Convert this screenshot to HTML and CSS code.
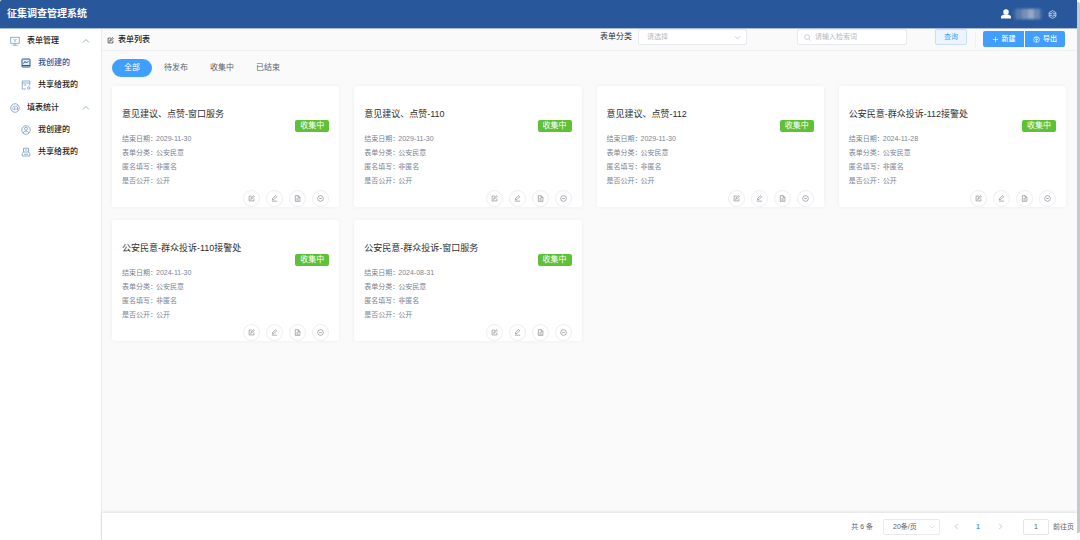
FILE: index.html
```
<!DOCTYPE html>
<html lang="zh-CN">
<head>
<meta charset="utf-8">
<meta name="viewport" content="width=device-width, initial-scale=1">
<title>征集调查管理系统</title>
<link rel="stylesheet" href="styles.css">
</head>
<body>
<svg class="sprite" aria-hidden="true">
  <symbol id="i-edit" viewBox="0 0 16 16"><path d="M9 2.500H2.500v11h11V8M6 10l1-3 6-5.500 1.500 1.500-6 6z"/></symbol>
  <symbol id="i-pen" viewBox="0 0 16 16"><path d="M3 11l1-3.500L10.500 1.500l2.500 2.500-6.500 6.500zM2 14h12"/></symbol>
  <symbol id="i-doc" viewBox="0 0 16 16"><path d="M3 1.500h6.500L13.500 5.500v9H3zM9.500 1.500v4h4M5.500 8.500h5M5.500 11.500h5"/></symbol>
  <symbol id="i-minus" viewBox="0 0 16 16"><circle cx="8" cy="8" r="6.500"/><path d="M5 8h6"/></symbol>
  <symbol id="i-up" viewBox="0 0 16 16"><path d="M2 11l6-6 6 6"/></symbol>
  <symbol id="i-down" viewBox="0 0 16 16"><path d="M2 5l6 6 6-6"/></symbol>
  <symbol id="i-left" viewBox="0 0 16 16"><path d="M11 2L5 8l6 6"/></symbol>
  <symbol id="i-right" viewBox="0 0 16 16"><path d="M5 2l6 6-6 6"/></symbol>
</svg>
<div class="app">
  <header class="header">
    <h1 class="brand">征集调查管理系统</h1>
    <div class="user">
      <svg class="user-icon" viewBox="0 0 20 20"><circle cx="10" cy="6" r="5.500"/><path d="M0 19v-3c0-3 3-4 6-5h8c3 1 6 2 6 5v3z"/></svg>
      <span class="user-name"><i></i><i></i><i></i><i></i></span>
      <button class="settings" aria-label="设置"><svg class="icon" viewBox="0 0 16 16"><path d="M8 1l6 3.500v7L8 15l-6-3.500v-7z"/><circle cx="8" cy="8" r="3"/><path d="M2 6h3M11 6h3M2 10h3M11 10h3"/></svg></button>
    </div>
  </header>
  <div class="body">
    <nav class="sidebar">
      <section>
        <button class="group-head">
          <svg class="icon nav-icon" viewBox="0 0 20 20"><rect x="1.500" y="2.500" width="17" height="12"/><path d="M10 15v3M5 18.500h10M7 6l3 3 3-3M10 9v3"/></svg>
          <span>表单管理</span><svg class="icon fold"><use href="#i-up"/></svg>
        </button>
        <a class="item active" href="#"><svg class="icon nav-icon" viewBox="0 0 20 20"><rect x="2" y="2" width="16" height="16" rx="1"/><path d="M2 15h16M5 11l3-4 3 3 4-4"/></svg>我创建的</a>
        <a class="item" href="#"><svg class="icon nav-icon" viewBox="0 0 20 20"><path d="M10 18H2.500V2h15v9M2.500 6h15M5.500 10h5"/><circle cx="15.500" cy="16" r="2.500"/></svg>共享给我的</a>
      </section>
      <section>
        <button class="group-head">
          <svg class="icon nav-icon" viewBox="0 0 20 20"><circle cx="10" cy="10" r="8.500"/><path d="M6 14v-3M9 14V9M12 14v-3M15 14V8M5 9l4-3 2 2 4-3"/></svg>
          <span>填表统计</span><svg class="icon fold"><use href="#i-up"/></svg>
        </button>
        <a class="item" href="#"><svg class="icon nav-icon" viewBox="0 0 20 20"><circle cx="10" cy="10" r="8.500"/><circle cx="10" cy="7.500" r="3"/><path d="M4.500 16c1-5 10-5 11 0"/></svg>我创建的</a>
        <a class="item" href="#"><svg class="icon nav-icon" viewBox="0 0 20 20"><path d="M5 10V2.500h10V10M5 10l-2.500 3v5h15v-5L15 10zM6 14.500h8M8 6h4"/></svg>共享给我的</a>
      </section>
    </nav>
    <main class="main">
      <div class="toolbar">
        <h2 class="page-title"><svg class="icon"><use href="#i-edit"/></svg>表单列表</h2>
        <label class="label" for="category">表单分类</label>
        <div class="field category">
          <select id="category"><option>请选择</option></select>
          <svg class="icon"><use href="#i-down"/></svg>
        </div>
        <div class="field search">
          <svg class="icon" viewBox="0 0 16 16"><circle cx="7" cy="7" r="5.500"/><path d="M11 11l4 4"/></svg>
          <input type="text" aria-label="检索词" placeholder="请输入检索词">
        </div>
        <button class="query">查询</button>
        <div class="actions">
          <button class="primary"><svg class="icon" viewBox="0 0 16 16"><path d="M8 2v12M2 8h12"/></svg>新建</button>
          <button class="primary"><svg class="icon" viewBox="0 0 16 16"><circle cx="8" cy="8" r="6.500"/><path d="M8 14V7M5 9l3-3 3 3M4 4h8"/></svg>导出</button>
        </div>
      </div>
      <div class="content">
        <div class="tabs">
          <button class="tab selected">全部</button>
          <button class="tab">待发布</button>
          <button class="tab">收集中</button>
          <button class="tab">已结束</button>
        </div>
        <div class="cards" id="cards"></div>
      </div>
      <footer class="pager">
        <span class="total">共 6 条</span>
        <div class="field size">
          <select aria-label="每页条数"><option>20条/页</option></select>
          <svg class="icon"><use href="#i-down"/></svg>
        </div>
        <button class="page" aria-label="上一页"><svg class="icon"><use href="#i-left"/></svg></button>
        <button class="page current">1</button>
        <button class="page" aria-label="下一页"><svg class="icon"><use href="#i-right"/></svg></button>
        <input class="jump" id="jump" type="text" value="1">
        <label for="jump">前往页</label>
      </footer>
    </main>
  </div>
</div>
<div class="edge"></div>
<script src="cards.js"></script>
</body>
</html>
```

FILE: cards.js
```
const forms = [
  ["意见建议、点赞-窗口服务", "2029-11-30"],
  ["意见建议、点赞-110", "2029-11-30"],
  ["意见建议、点赞-112", "2029-11-30"],
  ["公安民意-群众投诉-112接警处", "2024-11-28"],
  ["公安民意-群众投诉-110接警处", "2024-11-30"],
  ["公安民意-群众投诉-窗口服务", "2024-08-31"]
];
const tools = [["i-edit", "编辑"], ["i-pen", "填写"], ["i-doc", "查看"], ["i-minus", "停止"]];

document.getElementById("cards").innerHTML = forms.map(([title, date]) => `
  <article class="card">
    <div class="card-head"><h3 class="card-title">${title}</h3><span class="badge">收集中</span></div>
    <dl class="facts">
      <div><dt>结束日期：</dt><dd>${date}</dd></div>
      <div><dt>表单分类：</dt><dd>公安民意</dd></div>
      <div><dt>匿名填写：</dt><dd>非匿名</dd></div>
      <div><dt>是否公开：</dt><dd>公开</dd></div>
    </dl>
    <div class="tools">${tools.map(([id, name]) => `<button class="tool" aria-label="${name}"><svg class="icon"><use href="#${id}"/></svg></button>`).join("")}</div>
  </article>`).join("");
```

FILE: styles.css
```
* { box-sizing: border-box; }
body {
  margin: 0;
  min-height: 100vh;
  display: flex;
  background: #fff;
  color: #303133;
  font: 8px/14px "Liberation Sans", "Noto Sans CJK SC", sans-serif;
}
h1, h2, h3, dl, dd { margin: 0; font: inherit; }
button, input, select { font: inherit; color: inherit; margin: 0; padding: 0; border: 0; background: none; }
button { cursor: pointer; white-space: nowrap; }
a { color: inherit; text-decoration: none; }
.sprite { display: none; }
.icon { width: 7px; height: 7px; flex: none; fill: none; stroke: currentColor; stroke-width: 1.5; }

.app { flex: 1; min-width: 0; display: flex; flex-direction: column; }
.edge { width: 3px; margin: 2px 0 7px; background: #c9c9cb; border-radius: 0 2px 2px 0; }

.header {
  height: 29px;
  padding: 0 20px 0 7px;
  display: flex;
  align-items: center;
  justify-content: space-between;
  background: #29579b;
  border-bottom: 1px solid #a9bddb;
  border-radius: 2px 0 0 0;
  color: #fff;
}
.brand { font-size: 10px; font-weight: 700; }
.user { display: flex; align-items: center; gap: 2px; }
.user-icon { width: 10px; height: 10px; fill: #fff; }
.user-name { display: flex; width: 30px; height: 12px; padding: 1px 3px; border-radius: 4px; overflow: hidden; background: #3a649f; filter: blur(1px); }
.user-name i { flex: 1; background: #587bab; }
.user-name i:nth-child(2) { background: #7690b8; }
.user-name i:nth-child(3) { background: #94a7c5; }
.user-name i:nth-child(4) { background: #6a88b4; }
.settings { margin-left: 3px; display: flex; }
.settings .icon { width: 9px; height: 9px; stroke: #c8d6eb; }

.body { flex: 1; display: flex; }
.sidebar { width: 102px; flex: none; border-right: 1px solid #e9e9eb; color: #222; }
.group-head { width: 100%; height: 23px; padding: 0 11px 0 10px; display: flex; align-items: center; gap: 7px; }
.fold { margin-left: auto; width: 8px; height: 8px; color: #7299c6; }
.nav-icon { width: 10px; height: 10px; color: #6c93c4; }
.item { height: 22px; padding-left: 21px; display: flex; align-items: center; gap: 7px; }
.group-head, .item { font-weight: 500; }
.item.active { color: #29579b; }
.item.active .nav-icon { stroke-width: 2; color: #29579b; fill: #e3edf8; }

.main { flex: 1; min-width: 0; display: flex; flex-direction: column; background: #fafafa; }
.toolbar { height: 22px; padding: 0 12px 0 5px; display: flex; align-items: flex-start; border-bottom: 1px solid #f0f0f0; }
.page-title { display: flex; align-items: center; gap: 4px; margin-right: auto; height: 22px; color: #222; font-weight: 500; }
.label { line-height: 16px; margin-right: 6px; color: #333; }
.field { height: 16px; display: flex; align-items: center; background: #fff; border: 1px solid #e8eaee; border-radius: 2px; color: #b4b8c0; font-size: 7px; }
.field select { flex: 1; min-width: 0; height: 14px; appearance: none; }
.field input { flex: 1; min-width: 0; height: 14px; }
.field input::placeholder { color: #b4b8c0; opacity: 1; }
.category { width: 109px; padding: 0 5px 0 8px; margin-right: 50px; }
.search { width: 110px; padding: 0 6px; gap: 4px; margin-right: 28px; }
.query { width: 32px; height: 16px; margin-right: 8px; border: 1px solid #c6e0fb; border-radius: 2px; background: #ecf5ff; color: #409eff; font-size: 7px; line-height: 14px; }
.actions { display: flex; gap: 1px; margin-top: 2px; padding-left: 7px; border-left: 1px solid #f0f0f0; }
.primary { width: 41px; height: 16px; display: flex; align-items: center; justify-content: center; gap: 3px; background: #409eff; color: #fff; font-size: 7px; font-weight: 500; }
.primary:first-child { border-radius: 2px 0 0 2px; }
.primary:last-child { width: 40px; border-radius: 0 2px 2px 0; }

.content { flex: 1; padding: 8px 11px 13px 10px; }
.tabs { display: flex; gap: 2px; margin-bottom: 9px; }
.tab { height: 18px; padding: 0 10px; border-radius: 9px; color: #606266; }
.tab.selected { padding: 0 12px; background: #409eff; color: #fff; }
.cards { display: grid; grid-template-columns: repeat(4, minmax(0, 1fr)); gap: 13px 15px; }
.card { padding: 18px 10px 0; background: #fff; border-radius: 3px; box-shadow: 0 0 4px rgba(0, 0, 0, .05); }
.card-head { display: flex; justify-content: space-between; height: 28px; }
.card-title { font-size: 9px; line-height: 20px; white-space: nowrap; }
.badge { align-self: flex-end; width: 34px; border-radius: 2px; background: #5fc236; color: #fff; text-align: center; line-height: 12px; }
.facts { font-size: 7px; color: #7a8494; }
.facts div { display: flex; height: 14px; }
.facts dt { width: 34px; white-space: nowrap; }
.tools { display: flex; justify-content: flex-end; gap: 6px; margin-top: 2px; }
.tool { width: 17px; height: 17px; display: flex; align-items: center; justify-content: center; border: 1px solid #eceef1; border-radius: 50%; background: #fff; color: #707278; }
.tool .icon { stroke-width: 1.3; }

.pager { height: 27px; padding-right: 3px; display: flex; align-items: center; justify-content: flex-end; background: #fff; box-shadow: 0 -1px 3px rgba(0, 0, 0, .1); color: #606266; font-size: 7px; }
.total { margin-right: 10px; }
.size { width: 57px; padding: 0 4px 0 9px; margin-right: 5px; color: #606266; }
.size .icon { color: #c0c4cc; width: 6px; height: 6px; }
.page { width: 22px; height: 16px; display: flex; align-items: center; justify-content: center; color: #a8abb2; }
.page.current { color: #409eff; font-weight: 700; }
.jump { width: 26px; height: 16px; margin: 0 4px 0 12px; border: 1px solid #e4e7ed; border-radius: 2px; text-align: center; }
```
